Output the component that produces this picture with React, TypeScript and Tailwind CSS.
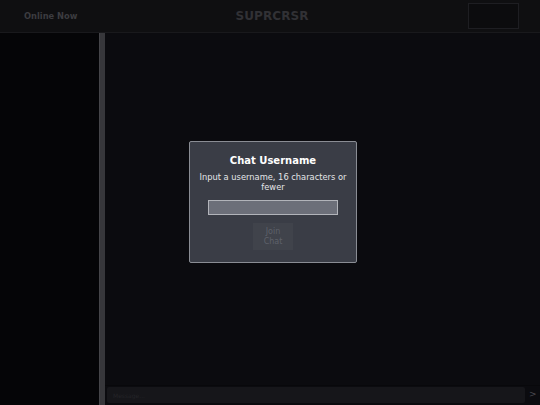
import React from "react";

export default function App() {
  return (
    <div
      className="relative w-[540px] h-[405px] overflow-hidden bg-[#0b0b0f] flex flex-col"
      style={{ fontFamily: '"DejaVu Sans", sans-serif' }}
    >
      <header className="h-[33px] shrink-0 bg-[#0f0f11] border-b border-[#19191c] flex items-center relative">
        <div className="w-[106px] pl-[24px] text-[8.3px] font-bold text-[#3c3c40]">Online Now</div>
        <div className="flex-1 text-center text-[12px] font-bold tracking-[0.1px] text-[#313135] pr-[30px]">
          SUPRCRSR
        </div>
        <div className="w-[51px] h-[26px] mr-[21px] border border-[#1e1e22] bg-[#0c0c0e]" />
      </header>
      <div className="flex-1 flex min-h-0">
        <aside className="w-[99px] bg-[#050507]" />
        <div className="w-[6px] bg-[#37373b] border-l border-[#454549]" />
        <main className="flex-1 flex flex-col">
          <div className="flex-1" />
          <div className="h-[20px] flex items-center border-t border-[#08080b] pb-[1px]">
            <div className="ml-[2px] w-[418px] h-[16px] rounded-[2px] bg-[#16161a] flex items-center pl-[6px]">
              <span className="text-[6px] text-[#242428]">Message...</span>
            </div>
            <span className="ml-[4px] text-[9px] text-[#4a4a50]">&gt;</span>
          </div>
        </main>
      </div>

      <div className="absolute left-[189px] top-[141px] w-[168px] h-[122px] rounded-[2px] border border-[#8a8d94] bg-[#3a3d46] flex flex-col items-center pt-[12px]">
        <div className="text-[10px] font-bold text-white leading-[13px]">Chat Username</div>
        <div className="mt-[5px] px-[4px] text-center text-[8.3px] leading-[10px] text-[#e4e5e8]">
          Input a username, 16 characters or fewer
        </div>
        <div className="mt-[8px] w-[130px] h-[15px] bg-[#6c6f79] border border-[#b2b4ba]" />
        <button className="mt-[8px] w-[40px] h-[27px] bg-[#40434b] text-[8px] leading-[10px] text-[#5e616a]">
          Join
          <br />
          Chat
        </button>
      </div>
    </div>
  );
}
